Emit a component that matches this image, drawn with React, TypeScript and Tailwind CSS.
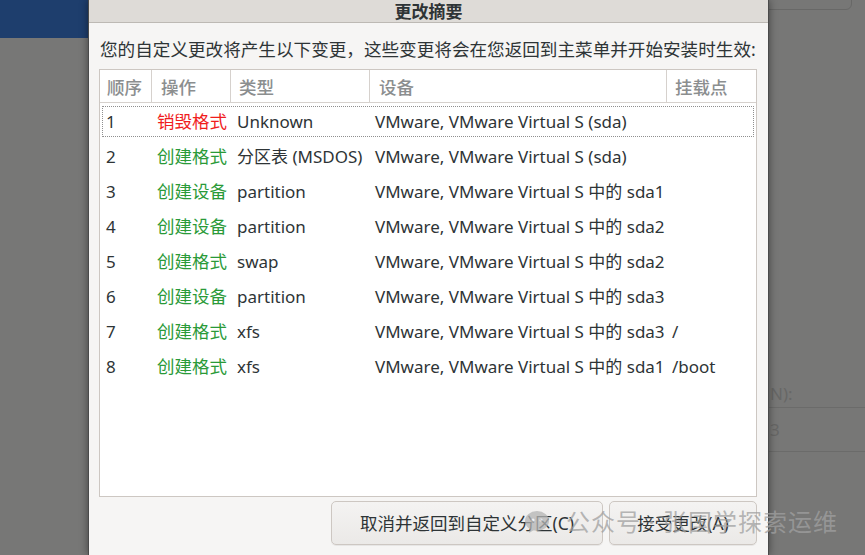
import React from "react";

const font = { fontFamily: '"Noto Sans", "Noto Sans CJK SC", sans-serif' };

type Row = { n: number; op: string; danger?: boolean; type: string; dev: string; mount: string };

const rows: Row[] = [
  { n: 1, op: "销毁格式", danger: true, type: "Unknown", dev: "VMware, VMware Virtual S (sda)", mount: "" },
  { n: 2, op: "创建格式", type: "分区表 (MSDOS)", dev: "VMware, VMware Virtual S (sda)", mount: "" },
  { n: 3, op: "创建设备", type: "partition", dev: "VMware, VMware Virtual S 中的 sda1", mount: "" },
  { n: 4, op: "创建设备", type: "partition", dev: "VMware, VMware Virtual S 中的 sda2", mount: "" },
  { n: 5, op: "创建格式", type: "swap", dev: "VMware, VMware Virtual S 中的 sda2", mount: "" },
  { n: 6, op: "创建设备", type: "partition", dev: "VMware, VMware Virtual S 中的 sda3", mount: "" },
  { n: 7, op: "创建格式", type: "xfs", dev: "VMware, VMware Virtual S 中的 sda3", mount: "/" },
  { n: 8, op: "创建格式", type: "xfs", dev: "VMware, VMware Virtual S 中的 sda1", mount: "/boot" },
];

const cols = "grid grid-cols-[52px_79px_139px_297px_89px]";

export default function App() {
  return (
    <div className="relative h-[555px] w-[865px] overflow-hidden bg-[#777776]" style={font}>
      {/* desktop behind the dialog (dimmed) */}
      <div className="h-[38px] w-[100px] bg-[#1e3e6d]" />
      <div className="absolute right-[13px] top-[-10px] h-[20px] w-[90px] rounded-b-md border border-[#686867]" />
      <div className="absolute left-[768px] top-[380px] w-[97px] text-[17px] text-[#676766]">
        <div className="h-[27px] pl-[2px] leading-[27px]">N):</div>
        <div className="border-t border-[#6b6b6a]" />
        <div className="h-[43px] pl-[2px] leading-[43px]">3</div>
        <div className="border-t border-[#6b6b6a]" />
      </div>

      {/* dialog window */}
      <div className="absolute left-[88px] top-0 flex h-[555px] w-[681px] flex-col border-x border-[#4a4a4a] bg-[#f6f5f4] shadow-[0_0_8px_rgba(0,0,0,0.45)]">
        <div className="flex h-[23px] shrink-0 items-center justify-center border-b border-[#bdb9b4] bg-[#dedbd7] text-[17px] font-bold leading-none text-[#2e3436]">
          更改摘要
        </div>
        <div className="flex flex-1 flex-col px-[10px]">
          <p className="mt-[14px] whitespace-nowrap pl-[1px] text-[17.6px] leading-[24px] text-[#2e3436]">
            您的自定义更改将产生以下变更，这些变更将会在您返回到主菜单并开始安装时生效:
          </p>
          <div className="mt-[8px] h-[428px] w-[658px] border border-[#cdc7c2] bg-white">
            <div className={`${cols} h-[33px] border-b border-[#d6d1cd] text-[17.5px] font-medium text-[#8b8e8f]`}>
              <div className="flex items-center border-r border-[#d6d1cd] pl-[7px] pt-[3px]">顺序</div>
              <div className="flex items-center border-r border-[#d6d1cd] pl-[9px] pt-[3px]">操作</div>
              <div className="flex items-center border-r border-[#d6d1cd] pl-[8px] pt-[3px]">类型</div>
              <div className="flex items-center border-r border-[#d6d1cd] pl-[9px] pt-[3px]">设备</div>
              <div className="flex items-center pl-[8px] pt-[3px]">挂载点</div>
            </div>
            <div className="pt-[1px]">
              {rows.map((r) => (
                <div
                  key={r.n}
                  className={`${cols} h-[35px] items-center text-[17px] text-[#2e3436] ${
                    r.n === 1 ? "rounded-[3px] outline outline-1 outline-dotted outline-offset-[-3px] outline-[#8f8f8f]" : ""
                  }`}
                >
                  <div className="pl-[6px]">{r.n}</div>
                  <div className={`pl-[5px] text-[17.5px] ${r.danger ? "text-[#f01d1d]" : "text-[#2a9a38]"}`}>{r.op}</div>
                  <div className="whitespace-nowrap pl-[6px]">{r.type}</div>
                  <div className="whitespace-nowrap pl-[5px]">{r.dev}</div>
                  <div className="pl-[5px]">{r.mount}</div>
                </div>
              ))}
            </div>
          </div>
          <div className="mt-[4px] flex justify-end gap-[6px] pr-[1px]">
            <button className="h-[44px] w-[272px] rounded-[5px] border border-[#cdc7c2] bg-gradient-to-b from-[#f4f3f2] to-[#ebe9e7] text-[17.5px] text-[#2e3436] shadow-[0_1px_0_rgba(0,0,0,0.06)]">
              取消并返回到自定义分区(C)
            </button>
            <button className="h-[44px] w-[148px] rounded-[5px] border border-[#cdc7c2] bg-gradient-to-b from-[#f4f3f2] to-[#ebe9e7] text-[17.5px] text-[#2e3436] shadow-[0_1px_0_rgba(0,0,0,0.06)]">
              接受更改(A)
            </button>
          </div>
        </div>
      </div>

      {/* watermark */}
      <div className="pointer-events-none absolute left-[524px] top-[504px] flex items-center gap-[16px] text-[24px] text-[#a0a0a0]/75">
        <svg width="26" height="24" viewBox="0 0 26 24" className="opacity-75">
          <ellipse cx="13" cy="11" rx="12" ry="10" fill="#b4b4b4" />
          <path d="M6 19 L5 23 L10 20 Z" fill="#b4b4b4" />
          <circle cx="9" cy="10" r="1.6" fill="#f4f4f4" />
          <circle cx="17" cy="10" r="1.6" fill="#f4f4f4" />
        </svg>
        <span className="tracking-[1px]">公众号 · 张国学探索运维</span>
      </div>
    </div>
  );
}
